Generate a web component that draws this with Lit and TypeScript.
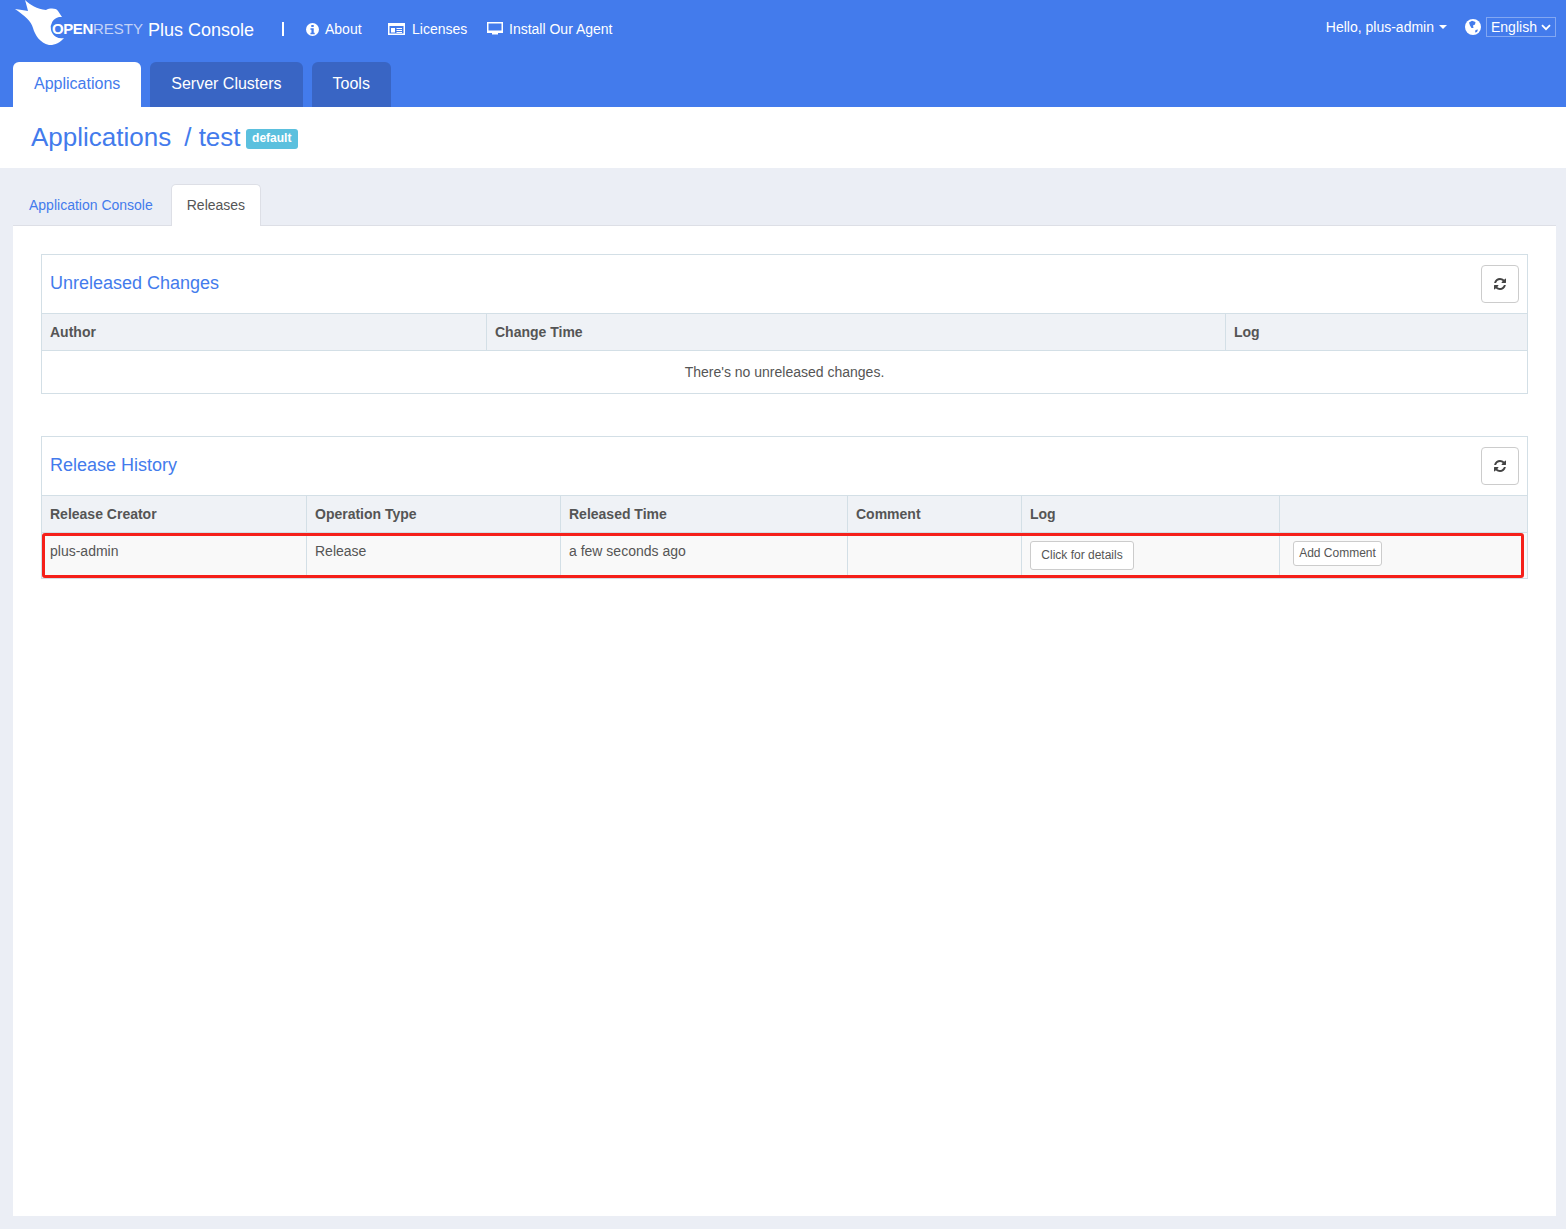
import {LitElement, html, css, svg} from 'lit';
import {customElement} from 'lit/decorators.js';

const refreshIcon = html`<svg width="12" height="12" viewBox="0 0 1536 1536" fill="currentColor"><path d="M1511 928q0 5-1 7-64 268-268 434.500T764 1536q-146 0-282.500-55T238 1324l-129 129q-19 19-45 19t-45-19-19-45V960q0-26 19-45t45-19h448q26 0 45 19t19 45-19 45l-137 137q71 66 161 102t187 36q134 0 250-65t186-179q11-17 53-117 8-23 30-23h192q13 0 22.500 9.500t9.500 22.500zm25-800v448q0 26-19 45t-45 19h-448q-26 0-45-19t-19-45 19-45l138-138q-148-137-349-137-134 0-250 65T332 500q-11 17-53 117-8 23-30 23H50q-13 0-22.500-9.500T18 608v-7q65-268 270-434.500T768 0q146 0 284 55.500T1297 212l130-129q19-19 45-19t45 19 19 45z"/></svg>`;

const logo = svg`<svg class="logo" width="56" height="46" viewBox="0 0 56 46" fill="#fff">
  <path d="M12 0C17 5 24 9 33 10C37 8 43 8 45 11L49 17L46 17A10.500 10.500 0 0 0 51 38C47 43 41 45.500 36 45C27 43 22 35 20 28C18 21 12 16 2 9C7 10 11 10 15 11C14 7 13 3 12 0Z"/>
</svg>`;

@customElement('app-root')
export class AppRoot extends LitElement {
  static styles = css`
    :host {
      display: block;
      min-height: 1229px;
      background: #ebeef5;
      font-family: "Liberation Sans", Arial, sans-serif;
      font-size: 14px;
      color: #555;
    }
    svg {
      display: block;
      flex: none;
    }

    .top {
      height: 107px;
      background: #437bec;
      color: #fff;
      display: flex;
      flex-direction: column;
      justify-content: space-between;
    }
    .bar {
      display: flex;
      align-items: flex-start;
      height: 62px;
    }
    .brand {
      display: flex;
      margin-left: 13px;
      width: 241px;
      position: relative;
    }
    .brand-text {
      position: absolute;
      left: 39px;
      top: 19px;
      font-size: 15px;
      line-height: 20px;
      letter-spacing: -0.4px;
      font-weight: bold;
      white-space: nowrap;
    }
    .brand-text span {
      font-weight: normal;
      color: #c3d3f7;
      letter-spacing: 0;
    }
    .brand-name {
      position: absolute;
      left: 135px;
      top: 20px;
      font-size: 18px;
      line-height: 21px;
      white-space: nowrap;
    }
    .sep {
      width: 2px;
      height: 14px;
      background: #fff;
      margin: 22px 0 0 28px;
    }
    .nav {
      display: flex;
      align-items: center;
      height: 20px;
      margin-top: 19px;
      white-space: nowrap;
    }
    .nav svg {
      margin-right: 6px;
    }
    .about {
      margin-left: 22px;
      width: 82px;
    }
    .licenses {
      width: 99px;
    }
    .licenses svg {
      margin-right: 7px;
    }
    .user {
      margin-left: auto;
      display: flex;
      align-items: center;
      height: 20px;
      margin-top: 17px;
      white-space: nowrap;
    }
    .caret {
      width: 0;
      height: 0;
      margin-left: 5px;
      border-left: 4px solid transparent;
      border-right: 4px solid transparent;
      border-top: 4px solid #fff;
    }
    .globe {
      margin-left: 18px;
    }
    .lang {
      display: flex;
      align-items: center;
      gap: 4px;
      box-sizing: border-box;
      width: 70px;
      height: 20px;
      margin: 0 10px 0 5px;
      padding: 0 0 0 4px;
      border: 1px solid #82a7f2;
    }

    .main-tabs {
      display: flex;
      padding-left: 13px;
      gap: 9px;
    }
    .main-tab {
      height: 45px;
      line-height: 44px;
      padding: 0 21px;
      font-size: 16px;
      background: #3965c4;
      border-radius: 6px 6px 0 0;
    }
    .main-tab.active {
      background: #fff;
      color: #437bec;
    }

    .title {
      height: 61px;
      box-sizing: border-box;
      background: #fff;
      display: flex;
      align-items: center;
      padding: 0 0 0 31px;
      font-size: 26px;
      color: #437bec;
    }
    .crumb {
      margin-left: 13px;
    }
    .label {
      margin: 2px 0 0 5px;
      padding: 0 6.5px;
      height: 20px;
      line-height: 18px;
      border-radius: 3px;
      background: #5bc0de;
      color: #fff;
      font-size: 12px;
      font-weight: bold;
    }

    .sub-tabs {
      display: flex;
      height: 42px;
      margin: 16px 10px 0 13px;
      border-bottom: 1px solid #dddfe6;
      box-sizing: border-box;
    }
    .sub-tab {
      padding: 0 18px 0 16px;
      line-height: 42px;
      color: #437bec;
    }
    .sub-tab.active {
      height: 42px;
      box-sizing: border-box;
      line-height: 40px;
      padding: 0 15px;
      color: #555;
      background: #fff;
      border: 1px solid #dddfe6;
      border-bottom: 0;
      border-radius: 5px 5px 0 0;
    }
    .content {
      height: 990px;
      box-sizing: border-box;
      margin: 0 10px 0 13px;
      padding: 28px 28px 0;
      background: #fff;
    }

    .panel {
      border: 1px solid #d3dfe6;
      margin-bottom: 42px;
      position: relative;
    }
    .panel-head {
      height: 58px;
      box-sizing: border-box;
      display: flex;
      align-items: center;
      justify-content: space-between;
      padding: 0 8px;
    }
    .panel-title {
      font-size: 18px;
      color: #437bec;
      margin-bottom: 2px;
    }
    .refresh {
      width: 38px;
      height: 38px;
      display: flex;
      align-items: center;
      justify-content: center;
      box-sizing: border-box;
      border: 1px solid #ccc;
      border-radius: 4px;
      background: #fff;
      color: #444;
      padding: 0;
    }
    .row {
      display: grid;
      border-top: 1px solid #d3dfe6;
    }
    .unreleased .row {
      grid-template-columns: 444px 739px 1fr;
    }
    .history .row {
      grid-template-columns: 264px 254px 287px 174px 258px 1fr;
    }
    .cell + .cell {
      border-left: 1px solid #d3dfe6;
    }
    .head {
      background: #eff2f6;
      height: 37px;
      box-sizing: border-box;
    }
    .head .cell {
      padding: 0 8px;
      line-height: 36px;
      font-weight: bold;
    }
    .empty {
      height: 43px;
      box-sizing: border-box;
      border-top: 1px solid #d3dfe6;
      text-align: center;
      line-height: 42px;
    }
    .data {
      height: 46px;
      box-sizing: border-box;
      background: #f9f9f9;
    }
    .data .cell {
      padding: 8px;
      line-height: 20px;
    }
    .btn {
      display: block;
      box-sizing: border-box;
      border: 1px solid #ccc;
      background: #fff;
      color: #555;
      font: inherit;
      font-size: 12px;
      border-radius: 3px;
    }
    .btn.details {
      width: 104px;
      height: 29px;
      padding: 0 0 2px;
    }
    .btn.comment {
      width: 89px;
      height: 25px;
      margin-left: 5px;
      padding: 0 0 2px;
    }
    .highlight {
      position: absolute;
      left: 0;
      right: 3px;
      bottom: 0;
      height: 45px;
      box-sizing: border-box;
      border: 3px solid #f5201a;
      border-radius: 3px;
      pointer-events: none;
    }
  `;

  render() {
    return html`
      <div class="top">
        <div class="bar">
          <div class="brand">
            ${logo}
            <div class="brand-text">OPEN<span>RESTY</span></div>
            <div class="brand-name">Plus Console</div>
          </div>
          <div class="sep"></div>
          <div class="nav about">
            <svg width="13" height="13" viewBox="0 0 16 16"><circle cx="8" cy="8" r="8" fill="#fff"/><path d="M6.500 2.500h3v2.500h-3zM5.500 6.500h4v5.500h1.200v1.800H5.500V12h1.200V8.300H5.500z" fill="#437bec"/></svg>
            About
          </div>
          <div class="nav licenses">
            <svg width="17" height="12" viewBox="0 0 17 12"><path d="M0 0h17v12H0z" fill="#fff"/><path d="M1.500 3h14v7.500h-14z" fill="#437bec"/><path d="M3 5h4v4.500H3zM8.500 5H14v1H8.500zM8.500 7H14v1H8.500zM8.500 9H14v1H8.500z" fill="#fff"/></svg>
            Licenses
          </div>
          <div class="nav">
            <svg width="16" height="14" viewBox="0 0 16 14"><path d="M0 0h16v11H0z" fill="#fff"/><path d="M1.500 1.500h13v7h-13z" fill="#437bec"/><path d="M5 11h6v1.500H5z" fill="#fff"/></svg>
            Install Our Agent
          </div>
          <div class="user">
            Hello, plus-admin
            <span class="caret"></span>
            <svg class="globe" width="16" height="16" viewBox="0 0 16 16"><circle cx="8" cy="8" r="8" fill="#fff"/><path d="M4 3.500 7 1.800 10.500 3 10 5.500 8 6.500 8.500 9 6.500 9 5 6.500zM10.500 11 13 10.500 12 13 10 13.500z" fill="#437bec"/></svg>
            <div class="lang">
              English
              <svg width="10" height="7" viewBox="0 0 10 7"><path d="M1 1.200 5 5.200 9 1.200" fill="none" stroke="#fff" stroke-width="1.800"/></svg>
            </div>
          </div>
        </div>
        <div class="main-tabs">
          <div class="main-tab active">Applications</div>
          <div class="main-tab">Server Clusters</div>
          <div class="main-tab">Tools</div>
        </div>
      </div>

      <div class="title">
        Applications
        <span class="crumb">/ test</span>
        <span class="label">default</span>
      </div>

      <div class="sub-tabs">
        <div class="sub-tab">Application Console</div>
        <div class="sub-tab active">Releases</div>
      </div>
      <div class="content">
        <div class="panel unreleased">
          <div class="panel-head">
            <div class="panel-title">Unreleased Changes</div>
            <button class="refresh">${refreshIcon}</button>
          </div>
          <div class="row head">
            <div class="cell">Author</div>
            <div class="cell">Change Time</div>
            <div class="cell">Log</div>
          </div>
          <div class="empty">There's no unreleased changes.</div>
        </div>

        <div class="panel history">
          <div class="panel-head">
            <div class="panel-title">Release History</div>
            <button class="refresh">${refreshIcon}</button>
          </div>
          <div class="row head">
            <div class="cell">Release Creator</div>
            <div class="cell">Operation Type</div>
            <div class="cell">Released Time</div>
            <div class="cell">Comment</div>
            <div class="cell">Log</div>
            <div class="cell"></div>
          </div>
          <div class="row data">
            <div class="cell">plus-admin</div>
            <div class="cell">Release</div>
            <div class="cell">a few seconds ago</div>
            <div class="cell"></div>
            <div class="cell"><button class="btn details">Click for details</button></div>
            <div class="cell"><button class="btn comment">Add Comment</button></div>
          </div>
          <div class="highlight"></div>
        </div>
      </div>
    `;
  }
}
